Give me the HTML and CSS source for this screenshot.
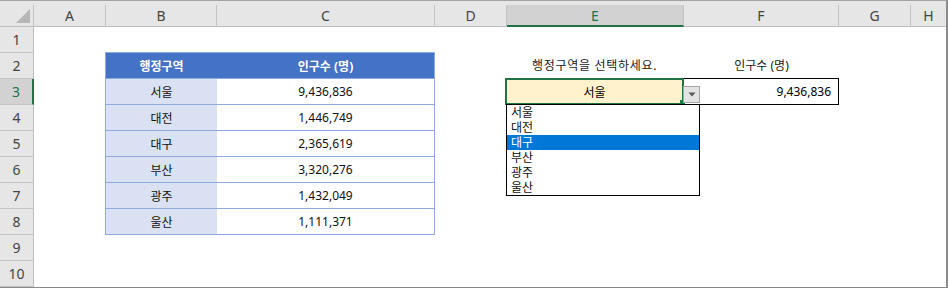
FILE: index.html
```html
<!DOCTYPE html>
<html lang="ko">
<head>
<meta charset="utf-8">
<title>행정구역 인구수</title>
<link rel="stylesheet" href="styles.css">
</head>
<body>
<div class="sheet">
  <div class="colhead">
    <div class="corner"><span class="tri"></span></div>
    <div class="ch c-a">A</div>
    <div class="ch c-b">B</div>
    <div class="ch c-c">C</div>
    <div class="ch c-d">D</div>
    <div class="ch c-e sel">E</div>
    <div class="ch c-f">F</div>
    <div class="ch c-g">G</div>
    <div class="ch c-h">H</div>
  </div>
  <div class="main">
    <div class="rowhead">
      <div class="rh">1</div>
      <div class="rh">2</div>
      <div class="rh sel">3</div>
      <div class="rh">4</div>
      <div class="rh">5</div>
      <div class="rh">6</div>
      <div class="rh">7</div>
      <div class="rh">8</div>
      <div class="rh">9</div>
      <div class="rh">10</div>
    </div>
    <div class="body">
      <div class="tbl">
        <div class="tr th"><div class="td">행정구역</div><div class="td">인구수 (명)</div></div>
        <div class="tr"><div class="td key">서울</div><div class="td">9,436,836</div></div>
        <div class="tr"><div class="td key">대전</div><div class="td">1,446,749</div></div>
        <div class="tr"><div class="td key">대구</div><div class="td">2,365,619</div></div>
        <div class="tr"><div class="td key">부산</div><div class="td">3,320,276</div></div>
        <div class="tr"><div class="td key">광주</div><div class="td">1,432,049</div></div>
        <div class="tr"><div class="td key">울산</div><div class="td">1,111,371</div></div>
      </div>
      <div class="lookup">
        <div class="labels">
          <div class="lbl lbl-e">행정구역을 선택하세요.</div>
          <div class="lbl lbl-f">인구수 (명)</div>
        </div>
        <div class="valrow">
          <div class="cell-e">서울</div>
          <div class="cell-f">9,436,836</div>
          <span class="handle"></span>
          <span class="ddbtn"><svg width="8" height="5" viewBox="0 0 8 5"><path d="M0.5 0.5 L7.5 0.5 L4 4.5 Z" fill="#595959"/></svg></span>
          <ul class="ddlist">
            <li>서울</li>
            <li>대전</li>
            <li class="hl">대구</li>
            <li>부산</li>
            <li>광주</li>
            <li>울산</li>
          </ul>
        </div>
      </div>
    </div>
  </div>
</div>
</body>
</html>
```

FILE: styles.css
```css
* { box-sizing: border-box; }
html, body { margin: 0; padding: 0; background: #fff; }
body {
  font-family: "Noto Sans", "Noto Sans CJK KR", sans-serif;
  font-size: 12px;
  color: #000;
}
.sheet {
  width: 948px;
  height: 288px;
  overflow: hidden;
  border-top: 1px solid #a3a3a3;
  border-right: 2px solid #8a8a8a;
  border-bottom: 1px solid #8a8a8a;
  display: flex;
  flex-direction: column;
}
.colhead {
  display: flex;
  height: 26px;
  padding-top: 4px;
  background: #e6e6e6;
  flex: none;
}
.corner, .ch {
  height: 22px;
  border-right: 1px solid #c4c4c4;
  border-bottom: 1px solid #bdbdbd;
  display: flex;
  align-items: center;
  justify-content: center;
  font-size: 14px;
  color: #444;
}
.corner { width: 34px; position: relative; }
.tri {
  position: absolute;
  left: 16px;
  top: 4px;
  width: 0; height: 0;
  border-left: 14px solid transparent;
  border-bottom: 14px solid #b7b7b7;
}
.c-a { width: 72px; }
.c-b { width: 111px; }
.c-c { width: 218px; }
.c-d { width: 72px; }
.c-e { width: 177px; }
.c-f { width: 155px; }
.c-g { width: 72px; }
.c-h { flex: 1; border-right: none; }
.ch.sel {
  background: #d2d2d2;
  border-bottom: 2px solid #217346;
  color: #217346;
}
.main { display: flex; flex: 1; }
.rowhead {
  width: 34px;
  flex: none;
  background: #e6e6e6;
}
.rh {
  height: 26px;
  border-right: 1px solid #bdbdbd;
  border-bottom: 1px solid #c4c4c4;
  display: flex;
  align-items: center;
  justify-content: center;
  font-size: 14px;
  color: #444;
}
.rh.sel {
  background: #d2d2d2;
  border-right: 2px solid #217346;
  color: #217346;
}
.body {
  flex: 1;
  display: flex;
  align-items: flex-start;
  padding-top: 25px;
  padding-left: 71px;
}
.tbl {
  width: 330px;
  border-left: 1px solid #8ea9db;
  border-right: 1px solid #8ea9db;
  border-bottom: 1px solid #8ea9db;
}
.tr {
  display: grid;
  grid-template-columns: 111px 1fr;
  height: 26px;
  border-top: 1px solid #8ea9db;
}
.td {
  display: flex;
  align-items: center;
  justify-content: center;
  color: #111;
}
.td.key { background: #d9e1f2; }
.th { background: #4472c4; }
.th .td { color: #fff; font-weight: bold; }
.lookup {
  margin-left: 70px;
  width: 334px;
}
.labels { display: flex; height: 26px; }
.lbl {
  display: flex;
  align-items: center;
  justify-content: center;
  color: #1a1a1a;
}
.lbl-e { width: 179px; letter-spacing: 0.7px; }
.lbl-f { width: 155px; }
.valrow {
  display: flex;
  height: 27px;
  position: relative;
}
.cell-e {
  width: 179px;
  border: 2px solid #217346;
  background: #fff2cc;
  display: flex;
  align-items: center;
  justify-content: center;
}
.cell-f {
  width: 155px;
  border: 1px solid #000;
  border-left: none;
  display: flex;
  align-items: center;
  justify-content: flex-end;
  padding-right: 7px;
}
.handle {
  position: absolute;
  left: 175px;
  top: 22px;
  width: 5px;
  height: 5px;
  background: #217346;
}
.ddbtn {
  position: absolute;
  left: 178px;
  top: 8px;
  width: 17px;
  height: 17px;
  background: #e3e3e3;
  border: 1px solid #a6a6a6;
  display: flex;
  align-items: center;
  justify-content: center;
}
.ddlist {
  position: absolute;
  left: 1px;
  top: 26px;
  width: 194px;
  height: 92px;
  margin: 0;
  padding: 0;
  list-style: none;
  background: #fff;
  border: 1px solid #000;
}
.ddlist li {
  height: 15px;
  line-height: 15px;
  padding-left: 4px;
  color: #111;
}
.ddlist li.hl { background: #0078d7; color: #fff; }
```
